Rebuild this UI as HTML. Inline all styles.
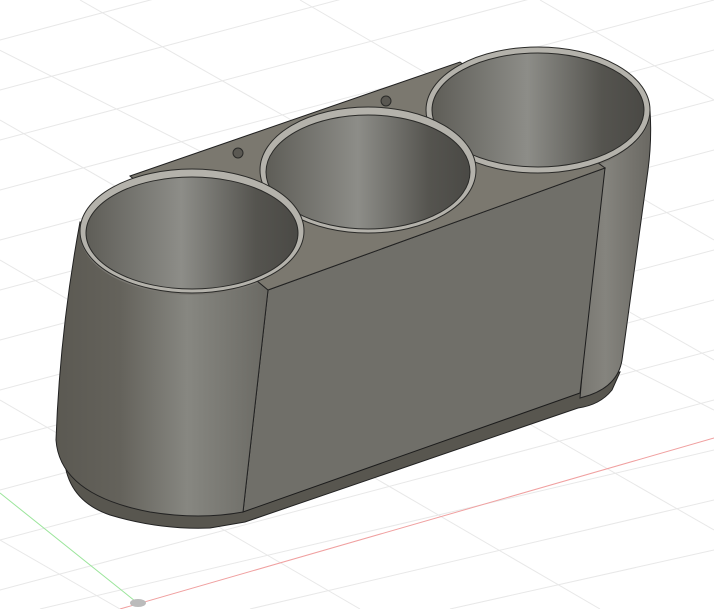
<!DOCTYPE html>
<html><head><meta charset="utf-8"><style>
html,body{margin:0;padding:0;background:#fff;}
svg{display:block;}
</style></head><body>
<svg width="714" height="609" viewBox="0 0 714 609" xmlns="http://www.w3.org/2000/svg">
<defs>
<linearGradient id="cylL" x1="0" x2="1" y1="0" y2="0">
<stop offset="0" stop-color="#5b5952"/><stop offset="0.3" stop-color="#64625b"/><stop offset="0.62" stop-color="#878781"/><stop offset="1" stop-color="#6a6963"/>
</linearGradient>
<linearGradient id="cylR" x1="0" x2="1">
<stop offset="0" stop-color="#6e6c66"/><stop offset="0.5" stop-color="#85847e"/><stop offset="1" stop-color="#6a6862"/>
</linearGradient>
<linearGradient id="cup" x1="0" x2="1">
<stop offset="0" stop-color="#5e5d57"/><stop offset="0.45" stop-color="#8d8d88"/><stop offset="0.8" stop-color="#55544f"/><stop offset="1" stop-color="#4a4945"/>
</linearGradient>
</defs>
<g stroke="#e8e8e8" stroke-width="1">
<line x1="0" y1="40" x2="714" y2="-150"/><line x1="0" y1="90" x2="714" y2="-100"/><line x1="0" y1="140" x2="714" y2="-50"/><line x1="0" y1="190" x2="714" y2="0"/><line x1="0" y1="240" x2="714" y2="50"/><line x1="0" y1="290" x2="714" y2="100"/><line x1="0" y1="340" x2="714" y2="150"/><line x1="0" y1="390" x2="714" y2="200"/><line x1="0" y1="440" x2="714" y2="250"/><line x1="0" y1="490" x2="714" y2="300"/><line x1="0" y1="540" x2="714" y2="350"/><line x1="0" y1="590" x2="714" y2="400"/><line x1="40" y1="609" x2="714" y2="450"/><line x1="250" y1="609" x2="714" y2="500"/><line x1="450" y1="609" x2="714" y2="550"/>
<line x1="-100" y1="0" x2="714" y2="410"/><line x1="0" y1="120" x2="714" y2="530"/><line x1="0" y1="260" x2="600" y2="609"/><line x1="0" y1="400" x2="360" y2="609"/><line x1="0" y1="540" x2="120" y2="609"/><line x1="80" y1="0" x2="714" y2="360"/><line x1="300" y1="0" x2="714" y2="240"/><line x1="540" y1="0" x2="714" y2="100"/>
</g>
<line x1="0" y1="493" x2="140" y2="605" stroke="#9be59b"/>
<line x1="120" y1="609" x2="714" y2="438" stroke="#f0a0a0"/>
<ellipse cx="138" cy="603" rx="8" ry="4" fill="#bbb"/>
<!-- base lip -->
<path d="M64 455 Q66 500 110 515 Q160 530 210 528 L245 522 L578 408 Q600 405 612 390 L620 372 L60 440 Z" fill="#58564f" stroke="#222" stroke-width="1"/>
<!-- right end -->
<path d="M560 140 L650 110 Q652 140 648 170 L622 360 Q618 385 590 395 L580 398 L600 170 Z" fill="url(#cylR)" stroke="#222" stroke-width="1"/>
<ellipse cx="538" cy="112" rx="112" ry="63" fill="#7a7872"/>
<!-- front face -->
<path d="M268 290 L605 168 L580 393 L243 512 Z" fill="#706f69" stroke="#1c1c1c" stroke-width="1"/>
<!-- left cylinder -->
<path d="M80 222 L200 240 L268 262 L268 290 L243 512 Q200 520 150 512 Q60 495 56 440 Q60 330 80 222 Z" fill="url(#cylL)" stroke="#222" stroke-width="1"/>
<ellipse cx="192" cy="233" rx="112" ry="62" fill="#7a7872"/>
<!-- top plate -->
<path d="M130 176 L460 62 L605 168 L268 290 Z" fill="#7b786f" stroke="#222" stroke-width="1"/>
<!-- rims -->
<ellipse cx="538" cy="110" rx="112" ry="63" fill="#b4b2ab" stroke="#2a2a28"/>
<ellipse cx="538" cy="110" rx="106" ry="57" fill="url(#cup)" stroke="#2a2a28"/>
<ellipse cx="368" cy="170" rx="108" ry="63" fill="#b4b2ab" stroke="#2a2a28"/>
<ellipse cx="368" cy="172" rx="102" ry="57" fill="url(#cup)" stroke="#2a2a28"/>
<ellipse cx="192" cy="231" rx="112" ry="62" fill="#b4b2ab" stroke="#2a2a28"/>
<ellipse cx="192" cy="233" rx="106" ry="56" fill="url(#cup)" stroke="#2a2a28"/>
<circle cx="238" cy="153" r="5" fill="#5a5852" stroke="#2a2a28"/>
<circle cx="386" cy="101" r="5" fill="#5a5852" stroke="#2a2a28"/>
</svg>
</body></html>
